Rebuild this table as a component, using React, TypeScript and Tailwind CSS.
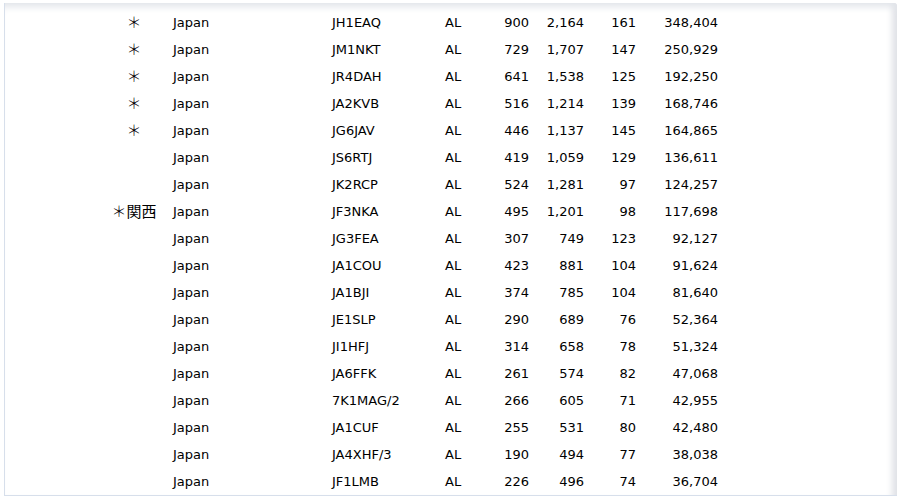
const rows: [string, string, string, string, string, string][] = [
  ["＊", "JH1EAQ", "900", "2,164", "161", "348,404"],
  ["＊", "JM1NKT", "729", "1,707", "147", "250,929"],
  ["＊", "JR4DAH", "641", "1,538", "125", "192,250"],
  ["＊", "JA2KVB", "516", "1,214", "139", "168,746"],
  ["＊", "JG6JAV", "446", "1,137", "145", "164,865"],
  ["", "JS6RTJ", "419", "1,059", "129", "136,611"],
  ["", "JK2RCP", "524", "1,281", "97", "124,257"],
  ["＊関西", "JF3NKA", "495", "1,201", "98", "117,698"],
  ["", "JG3FEA", "307", "749", "123", "92,127"],
  ["", "JA1COU", "423", "881", "104", "91,624"],
  ["", "JA1BJI", "374", "785", "104", "81,640"],
  ["", "JE1SLP", "290", "689", "76", "52,364"],
  ["", "JI1HFJ", "314", "658", "78", "51,324"],
  ["", "JA6FFK", "261", "574", "82", "47,068"],
  ["", "7K1MAG/2", "266", "605", "71", "42,955"],
  ["", "JA1CUF", "255", "531", "80", "42,480"],
  ["", "JA4XHF/3", "190", "494", "77", "38,038"],
  ["", "JF1LMB", "226", "496", "74", "36,704"],
];

export default function App() {
  return (
    <div className="w-[900px] h-[500px] bg-white pt-[3px] pl-[4px]">
      <div className="w-[893px] h-[493px] border-l border-b border-[#d7dfeb] rounded-tr-[3px] bg-white shadow-[inset_0_9px_7px_-5px_#e2e5ea,inset_-10px_0_6px_-5px_#e0e2e7] pt-[6px] overflow-hidden font-['DejaVu_Sans',Verdana,sans-serif] text-[13px] text-black">
        {rows.map((r, i) => (
          <div key={i} className="flex items-center h-[27px]">
            <div className="w-[99px]" />
            <div className="w-[60px] text-center text-[15px] font-['Noto_Sans_CJK_JP',sans-serif]">
              {r[0] && <span className="font-extralight">＊</span>}
              {r[0].slice(1)}
            </div>
            <div className="w-[159px] pl-[9px]">Japan</div>
            <div className="w-[113px] pl-[9px]">{r[1]}</div>
            <div className="w-[44px] pl-[9px]">AL</div>
            <div className="w-[55px] text-right pr-[6px]">{r[2]}</div>
            <div className="w-[55px] text-right pr-[6px]">{r[3]}</div>
            <div className="w-[52px] text-right pr-[6px]">{r[4]}</div>
            <div className="w-[82px] text-right pr-[6px]">{r[5]}</div>
          </div>
        ))}
      </div>
    </div>
  );
}
